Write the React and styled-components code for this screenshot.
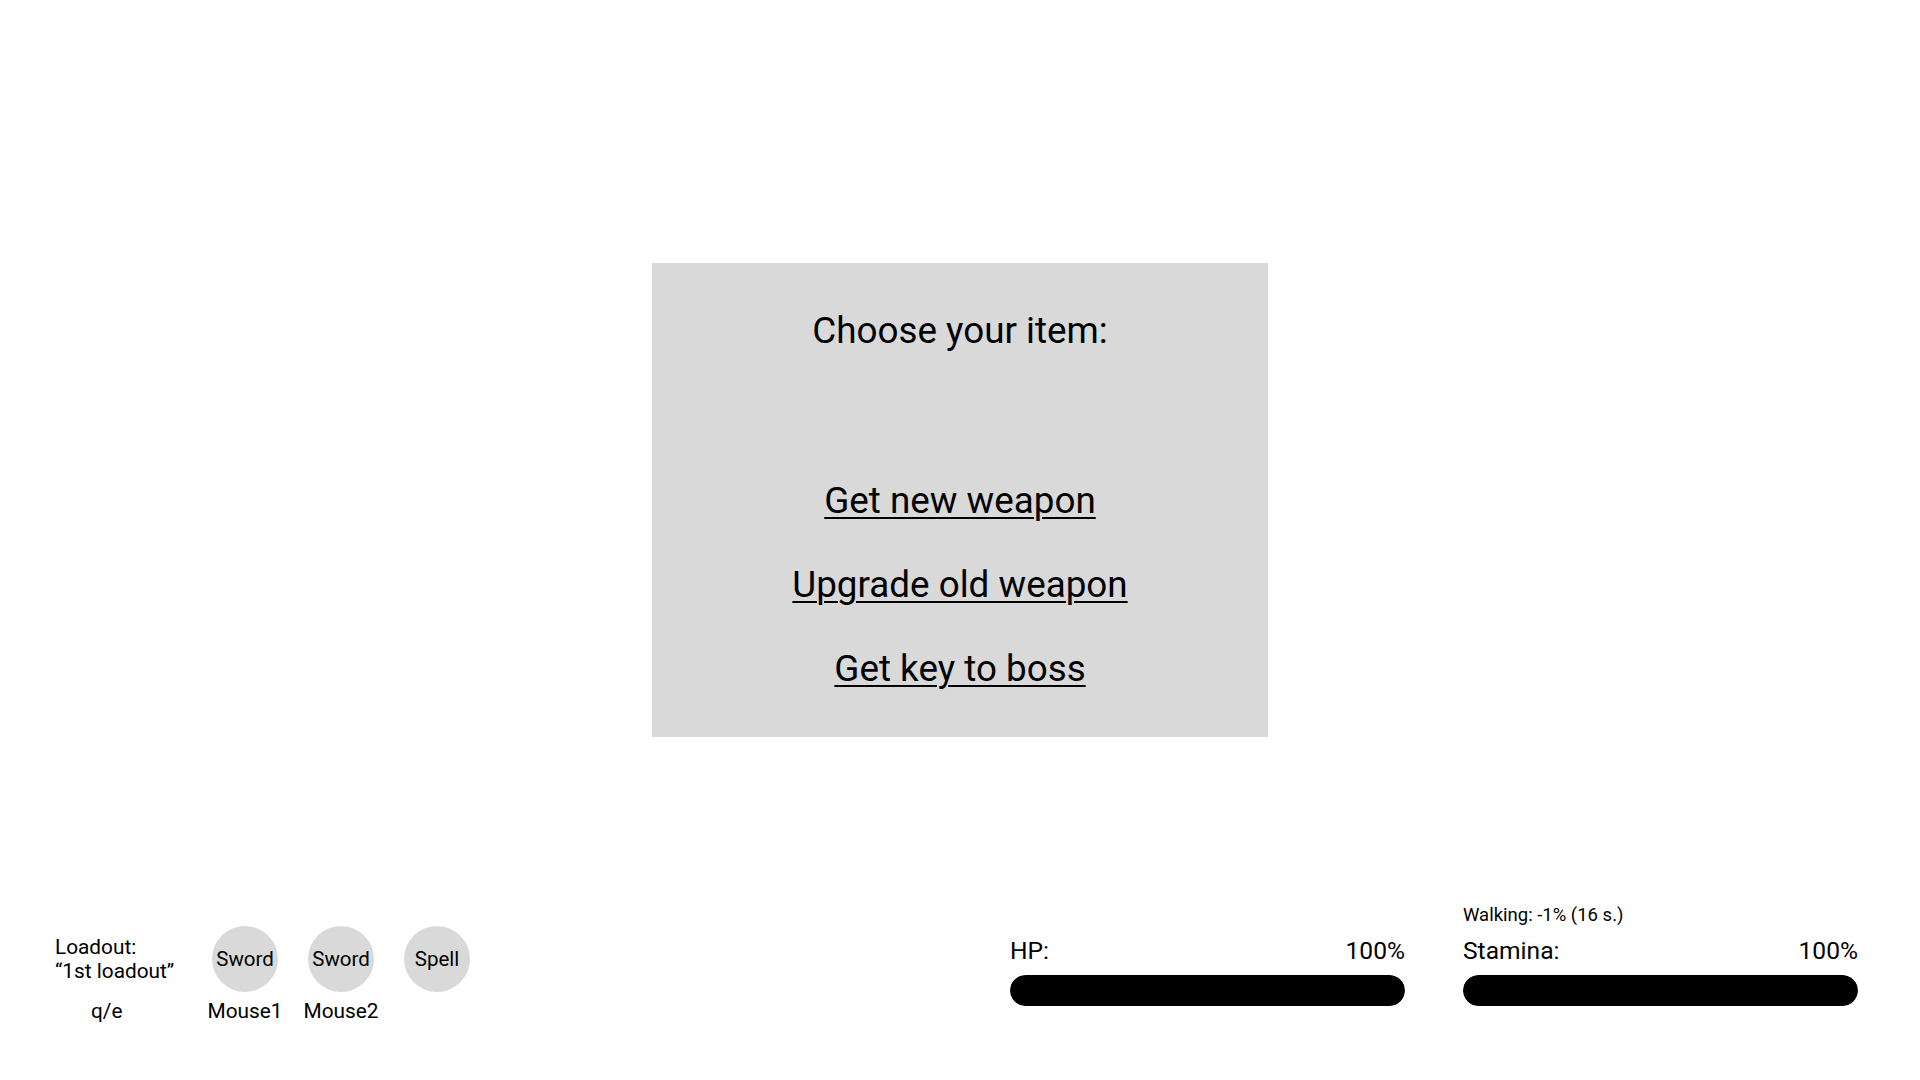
import React from 'react';
import styled, { createGlobalStyle } from 'styled-components';

const GlobalStyle = createGlobalStyle`
  html, body {
    margin: 0;
    padding: 0;
    background: #ffffff;
  }
  body {
    font-family: Roboto, "Liberation Sans", Arial, sans-serif;
    color: #000;
  }
`;

const Screen = styled.div`
  width: 1920px;
  height: 1080px;
  display: flex;
  flex-direction: column;
  align-items: center;
  box-sizing: border-box;
  padding-top: 263px;
  overflow: hidden;
`;

const ChoicePanel = styled.div`
  width: 616px;
  height: 474px;
  box-sizing: border-box;
  padding-top: 47px;
  background: #d9d9d9;
  display: flex;
  flex-direction: column;
  align-items: center;
`;

const PanelTitle = styled.h2`
  margin: 0 0 128px;
  font-size: 36.8px;
  font-weight: 400;
  line-height: 42px;
`;

const Options = styled.div`
  display: flex;
  flex-direction: column;
  align-items: center;
  gap: 42px;
`;

const Option = styled.a`
  font-size: 36.8px;
  line-height: 42px;
  color: #000;
  text-decoration: underline;
  text-decoration-thickness: 2px;
  text-underline-offset: 4px;
  cursor: pointer;
`;

const Hud = styled.div`
  margin-top: auto;
  width: 100%;
  box-sizing: border-box;
  padding: 0 62px 57px 55px;
  display: flex;
  justify-content: space-between;
  align-items: flex-end;
`;

const LoadoutGroup = styled.div`
  display: flex;
  align-items: flex-start;
  gap: 30px;
`;

const LoadoutInfo = styled.div`
  width: 127px;
  display: flex;
  flex-direction: column;
`;

const LoadoutName = styled.div`
  height: 66px;
  display: flex;
  flex-direction: column;
  justify-content: center;
  font-size: 20.8px;
  line-height: 24px;
  white-space: nowrap;
`;

const Slot = styled.div`
  width: 66px;
  display: flex;
  flex-direction: column;
  align-items: center;
`;

const SlotCircle = styled.div`
  width: 66px;
  height: 66px;
  border-radius: 50%;
  background: #d9d9d9;
  display: flex;
  align-items: center;
  justify-content: center;
  font-size: 20.5px;
`;

const KeyLabel = styled.div`
  margin-top: 7px;
  font-size: 20.8px;
  line-height: 24px;
  white-space: nowrap;
  padding-left: ${(p) => p.$indent || 0}px;
`;

const Stats = styled.div`
  display: flex;
  align-items: flex-end;
  gap: 58px;
  margin-bottom: 17px;
`;

const StatBlock = styled.div`
  width: 395px;
  display: flex;
  flex-direction: column;
`;

const StatNote = styled.div`
  font-size: 18.5px;
  line-height: 21px;
  margin-bottom: 11px;
`;

const StatHeader = styled.div`
  display: flex;
  justify-content: space-between;
  font-size: 24.6px;
  line-height: 28px;
  margin-bottom: 10px;
`;

const Bar = styled.div`
  height: 31px;
  border-radius: 999px;
  background: #e6e6e6;
  overflow: hidden;
`;

const BarFill = styled.div`
  height: 100%;
  background: #000;
  border-radius: 999px;
`;

const slots = [
  { name: 'Sword', key: 'Mouse1' },
  { name: 'Sword', key: 'Mouse2' },
  { name: 'Spell', key: null },
];

function Stat({ label, value, note }) {
  return (
    <StatBlock>
      {note && <StatNote>{note}</StatNote>}
      <StatHeader>
        <span>{label}</span>
        <span>{value}%</span>
      </StatHeader>
      <Bar>
        <BarFill style={{ width: `${value}%` }} />
      </Bar>
    </StatBlock>
  );
}

export default function App() {
  return (
    <>
      <GlobalStyle />
      <Screen>
        <ChoicePanel>
          <PanelTitle>Choose your item:</PanelTitle>
          <Options>
            <Option>Get new weapon</Option>
            <Option>Upgrade old weapon</Option>
            <Option>Get key to boss</Option>
          </Options>
        </ChoicePanel>

        <Hud>
          <LoadoutGroup>
            <LoadoutInfo>
              <LoadoutName>
                <span>Loadout:</span>
                <span>“1st loadout”</span>
              </LoadoutName>
              <KeyLabel $indent={36}>q/e</KeyLabel>
            </LoadoutInfo>
            {slots.map((s, i) => (
              <Slot key={i}>
                <SlotCircle>{s.name}</SlotCircle>
                {s.key && <KeyLabel>{s.key}</KeyLabel>}
              </Slot>
            ))}
          </LoadoutGroup>

          <Stats>
            <Stat label="HP:" value={100} />
            <Stat label="Stamina:" value={100} note="Walking: -1% (16 s.)" />
          </Stats>
        </Hud>
      </Screen>
    </>
  );
}
